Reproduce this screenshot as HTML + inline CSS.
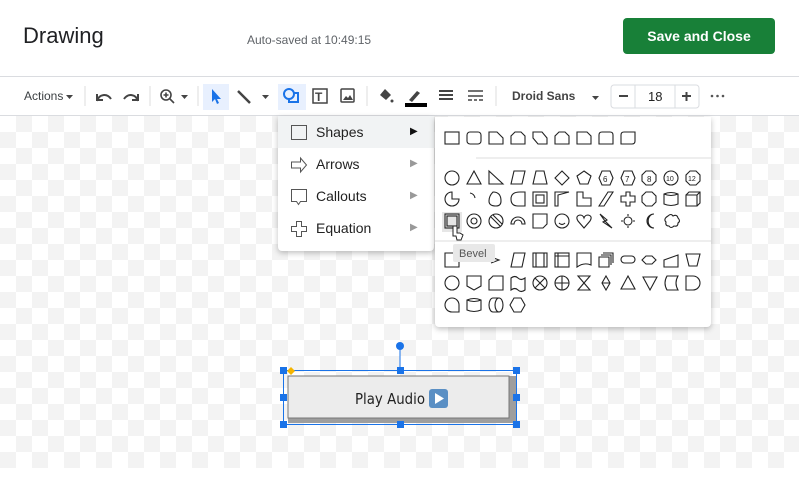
<!DOCTYPE html>
<html><head><meta charset="utf-8"><style>
*{margin:0;padding:0;box-sizing:border-box}
body{width:799px;height:494px;overflow:hidden;background:#fff;font-family:"Liberation Sans",Arial,sans-serif;position:relative}
.abs{position:absolute}
.canvas{position:absolute;left:0;top:116px;width:799px;height:352px;
background:repeating-conic-gradient(#f3f3f3 0 25%,#ffffff 0 50%) 0 0/32px 32px}
.menu{position:absolute;left:278px;top:116px;width:156px;height:135px;background:#fff;border-radius:0 0 4px 4px;box-shadow:0 2px 6px rgba(0,0,0,.25)}
.mi{position:absolute;left:0;width:156px;height:32px;font-size:14px;color:#222;line-height:32px}
.mi span.t{position:absolute;left:38px}
.mi span.a{position:absolute;left:132px;font-size:10px;color:#999}
.panel{position:absolute;left:435px;top:117px;width:276px;height:210px;background:#fff;border-radius:0 0 4px 4px;box-shadow:0 2px 6px rgba(0,0,0,.25)}
</style></head><body>
<div class="abs" style="left:23px;top:23px;font-size:22px;color:#202124">Drawing</div>
<div class="abs" style="left:247px;top:33px;font-size:12px;color:#5f6368">Auto-saved at 10:49:15</div>
<div class="abs" style="left:623px;top:18px;width:152px;height:36px;background:#188038;border-radius:4px;color:#fff;font-size:14px;font-weight:bold;text-align:center;line-height:36px">Save and Close</div>
<div class="abs" style="left:0;top:76px;width:799px;height:1px;background:#dadce0"></div>
<div class="abs" style="left:0;top:115px;width:799px;height:1px;background:#dadce0"></div>
<div class="canvas"></div>

<svg class="abs" style="left:0;top:77px" width="799" height="38">
<g font-family="Liberation Sans,Arial" font-size="12" fill="#3c4043">
<text x="24" y="23">Actions</text>
<path d="M66 18h7l-3.5 4z" fill="#444"/>
<line x1="85" y1="9" x2="85" y2="29" stroke="#ddd"/>
<path d="M97 24c2-7 10-8 14-2M97 17v6h6" stroke="#444" stroke-width="2" fill="none"/>
<path d="M138 24c-2-7-10-8-14-2M138 17v6h-6" stroke="#444" stroke-width="2" fill="none"/>
<line x1="150" y1="9" x2="150" y2="29" stroke="#ddd"/>
<circle cx="166" cy="18" r="5" stroke="#444" stroke-width="1.6" fill="none"/><path d="M170 22l4 4M163.5 18h5M166 15.5v5" stroke="#444" stroke-width="1.6"/>
<path d="M181 18h7l-3.5 4z" fill="#444"/>
<line x1="198" y1="9" x2="198" y2="29" stroke="#ddd"/>
<rect x="203" y="7" width="26" height="26" fill="#e8f0fe"/>
<path d="M212 12v13l3-3 2 5 2-1-2-4h4z" fill="#1a73e8"/>
<path d="M238 14l12 12" stroke="#444" stroke-width="2.5"/>
<path d="M262 18h7l-3.5 4z" fill="#444"/>
<rect x="278" y="7" width="28" height="26" fill="#e8f0fe"/>
<circle cx="289" cy="17" r="5" stroke="#1a73e8" stroke-width="2" fill="none"/><path d="M293 16h5v9h-9v-3" stroke="#1a73e8" stroke-width="2" fill="none"/>
<rect x="313" y="12" width="14" height="14" stroke="#444" stroke-width="1.5" fill="none"/><text x="315" y="24" font-weight="bold" font-size="12" fill="#444">T</text>
<rect x="341" y="12" width="13" height="13" stroke="#444" stroke-width="1.5" fill="none" rx="1"/><path d="M343 23l3-4 2 2 2-3 3 5z" fill="#444"/>
<line x1="367" y1="9" x2="367" y2="29" stroke="#ddd"/>
<path d="M380 18l5-6 6 6-5 5z" fill="#444"/><circle cx="392" cy="24" r="1.5" fill="#444"/>
<path d="M409 23l8-9 3 2-8 9z" fill="#444"/><rect x="405" y="26" width="22" height="4" fill="#000"/>
<path d="M439 14h14M439 18h14M439 22h14" stroke="#444" stroke-width="2"/>
<path d="M468 14h15M468 19h15M468 23h4M474 23h3M479 23h4" stroke="#444" stroke-width="1.5"/>
<line x1="496" y1="9" x2="496" y2="29" stroke="#ddd"/>
<text x="512" y="23" font-weight="bold" fill="#444">Droid Sans</text>
<path d="M592 19h7l-3.5 4z" fill="#444"/>
<rect x="611" y="8" width="88" height="23" rx="3" stroke="#dadce0" fill="#fff"/>
<line x1="635" y1="8" x2="635" y2="31" stroke="#dadce0"/><line x1="675" y1="8" x2="675" y2="31" stroke="#dadce0"/>
<path d="M619 19h9M682 19h9M686.5 15v9" stroke="#444" stroke-width="2"/>
<text x="648" y="24" font-size="13" fill="#222">18</text>
<circle cx="712" cy="19" r="1.3" fill="#555"/><circle cx="717.5" cy="19" r="1.3" fill="#555"/><circle cx="723" cy="19" r="1.3" fill="#555"/>
</g></svg>

<div class="menu">
<div class="mi" style="top:0;background:#f1f3f4"><svg class="abs" style="left:12px;top:8px" width="18" height="18"><rect x="1.5" y="1.5" width="15" height="14" fill="none" stroke="#555"/></svg><span class="t">Shapes</span><span class="a" style="color:#111">▶</span></div>
<div class="mi" style="top:32px"><svg class="abs" style="left:12px;top:8px" width="18" height="18"><path d="M1.5 6h9V2l6 7-6 7v-4h-9z" fill="none" stroke="#555"/></svg><span class="t">Arrows</span><span class="a">▶</span></div>
<div class="mi" style="top:64px"><svg class="abs" style="left:12px;top:8px" width="18" height="18"><path d="M1.5 1.5h15v12h-6l-2 3-2-3h-5z" fill="none" stroke="#555"/></svg><span class="t">Callouts</span><span class="a">▶</span></div>
<div class="mi" style="top:96px"><svg class="abs" style="left:12px;top:8px" width="18" height="18"><path d="M6.5 1.5h5v5h5v5h-5v5h-5v-5h-5v-5h5z" fill="none" stroke="#555"/></svg><span class="t">Equation</span><span class="a">▶</span></div>
</div>

<div class="panel"></div>
<svg class="abs" style="left:0;top:0" width="799" height="494">
<g stroke="#222" stroke-width="1.1" fill="none">
<rect x="445" y="132" width="14" height="12"/>
<rect x="467" y="132" width="14" height="12" rx="3"/>
<path d="M489 132h8l6 6v6h-14z"/>
<path d="M511 144v-8l4-4h6l4 4v8z"/>
<path d="M533 132h9l5 6v6h-9l-5-6z"/>
<path d="M555 144v-8l4-4h6l4 4v8z"/>
<path d="M577 132h10l4 4v8h-14z"/>
<path d="M599 144v-9q0-3 3-3h8q3 0 3 3v9z"/>
<path d="M621 144v-9q0-3 3-3h11v9q0 3-3 3z"/>
<line x1="476" y1="158" x2="711" y2="158" stroke="#ddd"/>
<circle cx="452" cy="178" r="7"/>
<path d="M474 171l7 13h-14z"/>
<path d="M489 171v13h14z"/>
<path d="M514 171h11l-3 13h-11z"/>
<path d="M536 171h8l3 13h-14z"/>
<path d="M562 171l7 7-7 7-7-7z"/>
<path d="M584 171l7 5-3 8h-8l-3-8z"/>
<path d="M602 171h8l3 7-3 7h-8l-3-7z"/><text x="603" y="182" font-size="8" fill="#222" stroke="none">6</text>
<path d="M624 171h8l3 7-3 7h-8l-3-7z"/><text x="625" y="182" font-size="8" fill="#222" stroke="none">7</text>
<path d="M646 171h6l4 4v6l-4 4h-6l-4-4v-6z"/><text x="647" y="182" font-size="8" fill="#222" stroke="none">8</text>
<circle cx="671" cy="178" r="7"/><text x="666" y="181" font-size="7" fill="#222" stroke="none">10</text>
<path d="M690 171h6l4 4v6l-4 4h-6l-4-4v-6z"/><text x="688" y="181" font-size="7" fill="#222" stroke="none">12</text>
<path d="M452 199v-7a7 7 0 1 0 7 7z"/>
<path d="M470 193a6 6 0 0 1 5 5"/>
<path d="M493 192q8 0 8 9 0 5-5 5-7 0-7-5 0-5 4-9z"/>
<path d="M520 192h5v14h-7q-7 0-7-7 0-7 9-7z"/>
<rect x="533" y="192" width="14" height="14"/><rect x="536" y="195" width="8" height="8"/>
<path d="M555 206v-14h14l-11 3v11z"/>
<path d="M577 192h6v6h8v8h-14z"/>
<path d="M599 206l9-14h5l-9 14z"/>
<path d="M626 192h4v4h5v6h-5v4h-4v-4h-5v-6h5z"/>
<path d="M646 192h6l4 4v6l-4 4h-6l-4-4v-6z"/>
<path d="M664 194v10q7 3 14 0v-10q-7 -3-14 0zm0 0q7 3 14 0"/>
<path d="M686 195h11v11h-11zm0 0l3-3h11v11l-3 3m0-11l3-3"/>
<rect x="442" y="212" width="20" height="20" fill="#e6e6e6" stroke="none"/>
<rect x="445" y="214" width="14" height="14"/><rect x="447" y="216" width="10" height="10"/>
<circle cx="474" cy="221" r="7"/><circle cx="474" cy="221" r="3"/>
<circle cx="496" cy="221" r="7"/><path d="M491 217l9 9M493 215l9 9"/>
<path d="M511 224a7 7 0 0 1 14 0h-3a4 4 0 0 0-8 0z"/>
<path d="M533 214h14v10l-4 4h-10z"/>
<circle cx="562" cy="221" r="7"/><path d="M559 223q3 3 6 0"/>
<path d="M584 228l-6-7q-3-5 2-6 3 0 4 3 1-3 4-3 5 1 2 6z"/>
<path d="M600 214l7 6-2 1 7 7-9-6 2-1z"/>
<circle cx="628" cy="221" r="4"/><path d="M628 214v2M628 226v2M621 221h2M633 221h2"/>
<path d="M654 214a7 7 0 1 0 0 14a5 6 0 0 1 0-14z"/>
<path d="M668 216q3-3 5 0 4-2 5 2 3 3 0 5 0 4-4 3-3 3-5 0-4 0-3-4-3-3 2-6z"/>
<line x1="435" y1="241" x2="711" y2="241" stroke="#ddd"/>
<path d="M445 253h14v14h-14z"/>
<path d="M491 257l8 3-8 3"/>
<path d="M514 253h11l-3 14h-11z"/>
<rect x="533" y="253" width="14" height="14"/><path d="M536 253v14M544 253v14"/>
<rect x="555" y="253" width="14" height="14"/><path d="M555 256h14M558 253v14"/>
<path d="M577 253h14v12q-7-3-14 2z"/>
<path d="M599 257h10v10h-10zm2-2h10v10m-8-12h10v10"/>
<rect x="621" y="256" width="14" height="7" rx="3.5"/>
<path d="M646 256h6l4 4-4 4h-6l-4-4z"/>
<path d="M664 267v-7l14-5v12z"/>
<path d="M686 254h14l-3 12h-8z"/>
<circle cx="452" cy="283" r="7"/>
<path d="M467 276h14v10l-7 4-7-4z"/>
<path d="M493 276h10v14h-14v-10z"/>
<path d="M511 278q4-3 7 0t7 0v12q-4 3-7 0t-7 0z"/>
<circle cx="540" cy="283" r="7"/><path d="M535 278l10 10M545 278l-10 10"/>
<circle cx="562" cy="283" r="7"/><path d="M562 276v14M555 283h14"/>
<path d="M578 276h12l-12 14h12z"/>
<path d="M606 276l4 7-4 7-4-7zM602 283h8"/>
<path d="M628 276l7 13h-14z"/>
<path d="M643 277h14l-7 13z"/>
<path d="M667 276h11q-4 7 0 14h-11q-4-7 0-14z"/>
<path d="M686 276h7a7 7 0 0 1 0 14h-7z"/>
<path d="M452 312a7 7 0 1 1 7-7v7z"/>
<path d="M467 300v10q7 3 14 0v-10q-7-3-14 0zm0 0q7 3 14 0"/>
<path d="M493 298h6a4 7 0 0 1 0 14h-6a4 7 0 0 1 0-14zm6 0a4 7 0 0 0 0 14"/>
<path d="M514 298h7l4 7-4 7h-7l-4-7z"/>
</g>
<rect x="453" y="244" width="42" height="18" rx="2" fill="#e8e8e8"/>
<text x="459" y="257" font-family="Liberation Sans,Arial" font-size="11" fill="#555">Bevel</text>
<path d="M453 226v10h3l1 4h4l2-5-3-2h-3v-7z" fill="#fff" stroke="#222" stroke-width="1"/>
</svg>

<svg class="abs" style="left:278px;top:340px" width="245" height="95">
<line x1="122" y1="6" x2="122" y2="30" stroke="#1a73e8"/>
<circle cx="122" cy="6" r="4" fill="#1a73e8"/>
<rect x="10" y="36" width="228" height="47" fill="#9e9e9e"/>
<rect x="10" y="36" width="221" height="42" fill="#ececec" stroke="#777"/>
<rect x="5.5" y="30.5" width="233" height="54" fill="none" stroke="#1a73e8"/>
<text x="77" y="64" font-family="DejaVu Sans,Liberation Sans,sans-serif" font-size="15" textLength="70" lengthAdjust="spacingAndGlyphs" fill="#222">Play Audio</text>
<rect x="151" y="49" width="19" height="19" rx="3" fill="#5a8fc4"/><path d="M157 53v11l9-5.5z" fill="#fff"/>
<g fill="#1a73e8"><rect x="2" y="27" width="7" height="7"/><rect x="119" y="27" width="7" height="7"/><rect x="235" y="27" width="7" height="7"/><rect x="2" y="54" width="7" height="7"/><rect x="235" y="54" width="7" height="7"/><rect x="2" y="81" width="7" height="7"/><rect x="119" y="81" width="7" height="7"/><rect x="235" y="81" width="7" height="7"/></g>
<path d="M13 27l4 4-4 4-4-4z" fill="#f4b400"/>
</svg>
</body></html>
